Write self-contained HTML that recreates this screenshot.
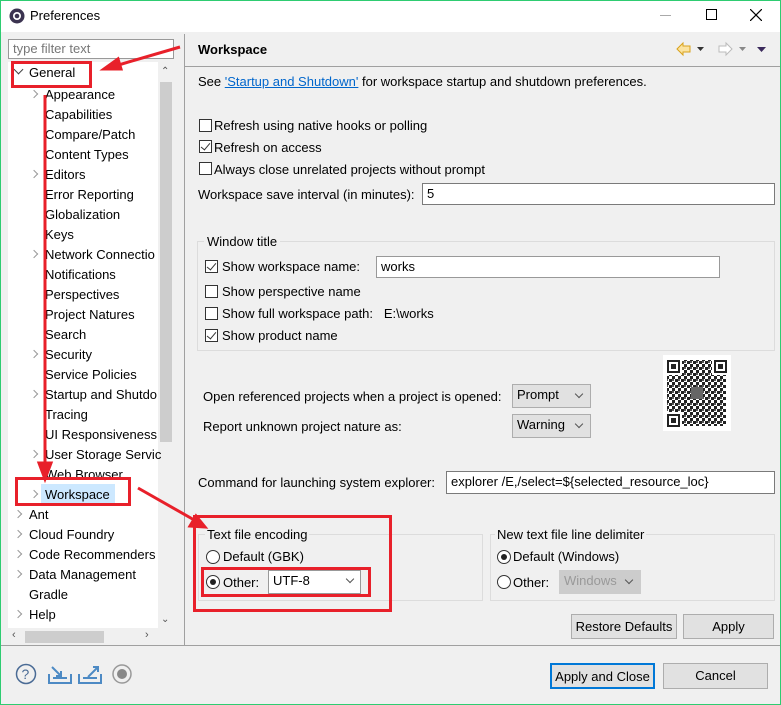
<!DOCTYPE html>
<html><head><meta charset="utf-8"><style>
*{box-sizing:border-box;margin:0;padding:0}
body{width:781px;height:705px;position:relative;overflow:hidden;background:#f0f0f0;font-family:"Liberation Sans","Noto Sans CJK SC",sans-serif;font-size:13px;color:#000}
.a{position:absolute;white-space:nowrap}
.cb{position:absolute;width:13px;height:13px;border:1px solid #333;background:#fff}
.cb.on::after{content:"";position:absolute;left:3px;top:0px;width:4px;height:8px;border:solid #333;border-width:0 1.5px 1.5px 0;transform:rotate(40deg)}
.rd{position:absolute;width:14px;height:14px;border:1px solid #333;border-radius:50%;background:#fff}
.rd.on::after{content:"";position:absolute;left:3px;top:3px;width:6px;height:6px;border-radius:50%;background:#222}
.in{position:absolute;background:#fff;border:1px solid #7a7a7a;padding-left:4px;line-height:20px}
.dd{position:absolute;background:#e1e1e1;border:1px solid #adadad;padding-left:4px;line-height:20px}
.dd::after{content:"";position:absolute;right:8px;top:6px;width:5px;height:5px;border:solid #555;border-width:0 1px 1px 0;transform:rotate(45deg)}
.btn{position:absolute;background:#e1e1e1;border:1px solid #adadad;text-align:center;line-height:23px}
.grp{position:absolute;border:1px solid #dcdcdc}
.chev{position:absolute;width:6px;height:6px;border:solid #999;border-width:1.5px 1.5px 0 0;transform:rotate(45deg)}
.red{position:absolute;border:3px solid #e8202a}
</style></head><body>
<div class="a" style="left:0;top:0;width:781px;height:705px;border:1px solid #2ecc71;z-index:50;pointer-events:none"></div>
<div class="a" style="left:0;top:0;width:781px;height:32px;background:#fff"></div>
<svg class="a" style="left:8px;top:7px" width="18" height="18" viewBox="0 0 18 18"><circle cx="9" cy="9" r="7.5" fill="#3b3350"/><circle cx="9" cy="9" r="4" fill="#fff"/><circle cx="9" cy="9" r="2.3" fill="#3b3350"/></svg>
<div class="a" style="left:30px;top:8px">Preferences</div>
<div class="a" style="left:660px;top:15px;width:11px;height:1px;background:#aaa"></div>
<div class="a" style="left:706px;top:9px;width:11px;height:11px;border:1px solid #000"></div>
<svg class="a" style="left:750px;top:9px" width="12" height="12"><path d="M0 0L12 12M12 0L0 12" stroke="#000" stroke-width="1.2"/></svg>

<div class="in" style="left:8px;top:39px;width:166px;height:20px;line-height:18px;color:#777;border-color:#999">type filter text</div>
<div class="a" style="left:8px;top:62px;width:150px;height:566px;background:#fff"></div>
<div class="a" style="left:158px;top:62px;width:16px;height:566px;background:#f0f0f0"></div>
<div class="a" style="left:160px;top:82px;width:12px;height:360px;background:#cdcdcd"></div>
<div class="a" style="left:161px;top:66px;font-size:10px;color:#555">⌃</div>
<div class="a" style="left:161px;top:614px;font-size:10px;color:#555">⌄</div>
<div class="a" style="left:8px;top:628px;width:166px;height:17px;background:#f0f0f0"></div>
<div class="a" style="left:25px;top:631px;width:79px;height:12px;background:#cdcdcd"></div>
<div class="a" style="left:12px;top:629px;font-size:11px;color:#555">‹</div>
<div class="a" style="left:145px;top:629px;font-size:11px;color:#555">›</div>
<div class="a" style="left:184px;top:34px;width:1px;height:612px;background:#a0a0a0"></div>

<div class="a" style="left:15px;top:66px;width:7px;height:7px;border:solid #444;border-width:0 1.5px 1.5px 0;transform:rotate(45deg)"></div>
<div class="a" style="left:29px;top:65px">General</div>
<div class="a" style="left:45px;top:85px;line-height:20px">Appearance<br>Capabilities<br>Compare/Patch<br>Content Types<br>Editors<br>Error Reporting<br>Globalization<br>Keys<br>Network Connectio<br>Notifications<br>Perspectives<br>Project Natures<br>Search<br>Security<br>Service Policies<br>Startup and Shutdo<br>Tracing<br>UI Responsiveness<br>User Storage Servic<br>Web Browser</div>
<div class="a" style="left:41px;top:484px;width:74px;height:20px;background:#cce8ff"></div>
<div class="a" style="left:45px;top:485px;line-height:20px">Workspace</div>
<div class="a" style="left:29px;top:505px;line-height:20px">Ant<br>Cloud Foundry<br>Code Recommenders<br>Data Management<br>Gradle<br>Help</div>
<div class="chev" style="left:31px;top:91px"></div><div class="chev" style="left:31px;top:171px"></div><div class="chev" style="left:31px;top:251px"></div><div class="chev" style="left:31px;top:351px"></div><div class="chev" style="left:31px;top:391px"></div><div class="chev" style="left:31px;top:451px"></div><div class="chev" style="left:31px;top:491px"></div>
<div class="chev" style="left:15px;top:511px"></div><div class="chev" style="left:15px;top:531px"></div><div class="chev" style="left:15px;top:551px"></div><div class="chev" style="left:15px;top:571px"></div><div class="chev" style="left:15px;top:611px"></div>

<div class="a" style="left:198px;top:42px;font-weight:bold">Workspace</div>
<svg class="a" style="left:675px;top:41px" width="100" height="16"><path d="M2 8 L8 2 V5 H15 V11 H8 V14 Z" fill="#fbe3a0" stroke="#d9a21b"/><path d="M22 6h7l-3.5 4z" fill="#333"/><path d="M57 8 L51 2 V5 H44 V11 H51 V14 Z" fill="#fff" stroke="#bbb"/><path d="M64 6h7l-3.5 4z" fill="#888"/><path d="M82 6h9l-4.5 5z" fill="#3b2a5c"/></svg>
<div class="a" style="left:185px;top:66px;width:596px;height:1px;background:#a0a0a0"></div>
<div class="a" style="left:198px;top:74px">See <span style="color:#0066cc;text-decoration:underline">'Startup and Shutdown'</span> for workspace startup and shutdown preferences.</div>

<div class="cb" style="left:199px;top:119px"></div><div class="a" style="left:214px;top:118px">Refresh using native hooks or polling</div>
<div class="cb on" style="left:199px;top:140px"></div><div class="a" style="left:214px;top:140px">Refresh on access</div>
<div class="cb" style="left:199px;top:162px"></div><div class="a" style="left:214px;top:162px">Always close unrelated projects without prompt</div>
<div class="a" style="left:198px;top:187px">Workspace save interval (in minutes):</div>
<div class="in" style="left:422px;top:183px;width:353px;height:22px">5</div>

<div class="grp" style="left:197px;top:241px;width:578px;height:110px"></div>
<div class="a" style="left:204px;top:234px;background:#f0f0f0;padding:0 3px">Window title</div>
<div class="cb on" style="left:205px;top:260px"></div><div class="a" style="left:222px;top:259px">Show workspace name:</div>
<div class="in" style="left:376px;top:256px;width:344px;height:22px;border-color:#999">works</div>
<div class="cb" style="left:205px;top:285px"></div><div class="a" style="left:222px;top:284px">Show perspective name</div>
<div class="cb" style="left:205px;top:307px"></div><div class="a" style="left:222px;top:306px">Show full workspace path:&nbsp;&nbsp; E:\works</div>
<div class="cb on" style="left:205px;top:329px"></div><div class="a" style="left:222px;top:328px">Show product name</div>

<svg class="a" style="left:663px;top:355px" width="68" height="76"><defs><pattern id="q" width="6" height="6" patternUnits="userSpaceOnUse"><rect width="3" height="3" fill="#222"/><rect x="3" y="3" width="3" height="3" fill="#222"/><rect x="3" width="2" height="2" fill="#555"/></pattern></defs><rect width="68" height="76" fill="#fff"/><rect x="4" y="5" width="59" height="66" fill="url(#q)"/><rect x="2" y="3" width="17" height="17" fill="#fff"/><rect x="49" y="3" width="17" height="17" fill="#fff"/><rect x="2" y="57" width="17" height="17" fill="#fff"/><g fill="#222"><rect x="4" y="5" width="13" height="13"/><rect x="51" y="5" width="13" height="13"/><rect x="4" y="59" width="13" height="13"/></g><g fill="#fff"><rect x="6" y="7" width="9" height="9"/><rect x="53" y="7" width="9" height="9"/><rect x="6" y="61" width="9" height="9"/></g><g fill="#222"><rect x="8" y="9" width="5" height="5"/><rect x="55" y="9" width="5" height="5"/><rect x="8" y="63" width="5" height="5"/></g><rect x="28" y="32" width="12" height="12" fill="#666"/></svg>

<div class="a" style="left:203px;top:389px">Open referenced projects when a project is opened:</div>
<div class="dd" style="left:512px;top:384px;width:79px;height:24px">Prompt</div>
<div class="a" style="left:203px;top:419px">Report unknown project nature as:</div>
<div class="dd" style="left:512px;top:414px;width:79px;height:24px">Warning</div>
<div class="a" style="left:198px;top:475px">Command for launching system explorer:</div>
<div class="in" style="left:446px;top:471px;width:329px;height:23px">explorer /E,/select=${selected_resource_loc}</div>

<div class="grp" style="left:198px;top:534px;width:285px;height:67px"></div>
<div class="a" style="left:205px;top:527px;background:#f0f0f0;padding:0 2px">Text file encoding</div>
<div class="rd" style="left:206px;top:550px"></div><div class="a" style="left:223px;top:549px">Default (GBK)</div>
<div class="rd on" style="left:206px;top:575px"></div><div class="a" style="left:223px;top:575px">Other:</div>
<div class="in" style="left:268px;top:570px;width:93px;height:24px;border-color:#999">UTF-8</div>
<div class="a" style="left:347px;top:576px;width:6px;height:6px;border:solid #555;border-width:0 1px 1px 0;transform:rotate(45deg)"></div>
<div class="grp" style="left:490px;top:534px;width:285px;height:67px"></div>
<div class="a" style="left:495px;top:527px;background:#f0f0f0;padding:0 2px">New text file line delimiter</div>
<div class="rd on" style="left:497px;top:550px"></div><div class="a" style="left:513px;top:549px">Default (Windows)</div>
<div class="rd" style="left:497px;top:575px"></div><div class="a" style="left:513px;top:575px">Other:</div>
<div class="dd" style="left:559px;top:570px;width:82px;height:24px;color:#999;background:#ccc;border-color:#ccc">Windows</div>

<div class="btn" style="left:571px;top:614px;width:106px;height:25px">Restore Defaults</div>
<div class="btn" style="left:683px;top:614px;width:91px;height:25px">Apply</div>
<div class="a" style="left:0;top:645px;width:781px;height:1px;background:#a0a0a0"></div>
<div class="btn" style="left:550px;top:663px;width:105px;height:26px;border:2px solid #0078d7">Apply and Close</div>
<div class="btn" style="left:663px;top:663px;width:105px;height:26px">Cancel</div>
<svg class="a" style="left:15px;top:662px" width="120" height="26"><circle cx="11" cy="12" r="9.5" fill="none" stroke="#4a6b95" stroke-width="1.5"/><text x="6.5" y="17" font-size="14" font-family="Liberation Sans" fill="#4a6b95">?</text><path d="M34 12v9h22v-9M38 16h14" fill="none" stroke="#4d8ac4" stroke-width="2"/><path d="M37 5l9 9m0-5v5h-5" stroke="#4d8ac4" stroke-width="2" fill="none"/><path d="M64 12v9h22v-9M68 16h14" fill="none" stroke="#4d8ac4" stroke-width="2"/><path d="M73 15l10-10m-5 0h5v5" stroke="#4d8ac4" stroke-width="2" fill="none"/><circle cx="107" cy="12" r="9" fill="none" stroke="#999" stroke-width="1.5"/><circle cx="107" cy="12" r="5" fill="#888"/></svg>

<div class="red" style="left:11px;top:61px;width:81px;height:27px"></div>
<div class="red" style="left:15px;top:477px;width:116px;height:29px"></div>
<div class="red" style="left:193px;top:515px;width:199px;height:97px"></div>
<div class="red" style="left:201px;top:567px;width:170px;height:30px"></div>
<svg class="a" style="left:0;top:0" width="781" height="705"><g stroke="#e8202a" stroke-width="3" fill="#e8202a"><line x1="180" y1="47" x2="115" y2="66"/><path d="M104 69l14-10 3 10z"/><line x1="45" y1="95" x2="45" y2="465"/><path d="M39 463h12l-6 16z"/><line x1="138" y1="488" x2="196" y2="521"/><path d="M205 527l-15-1 6-10z"/></g></svg>
</body></html>
